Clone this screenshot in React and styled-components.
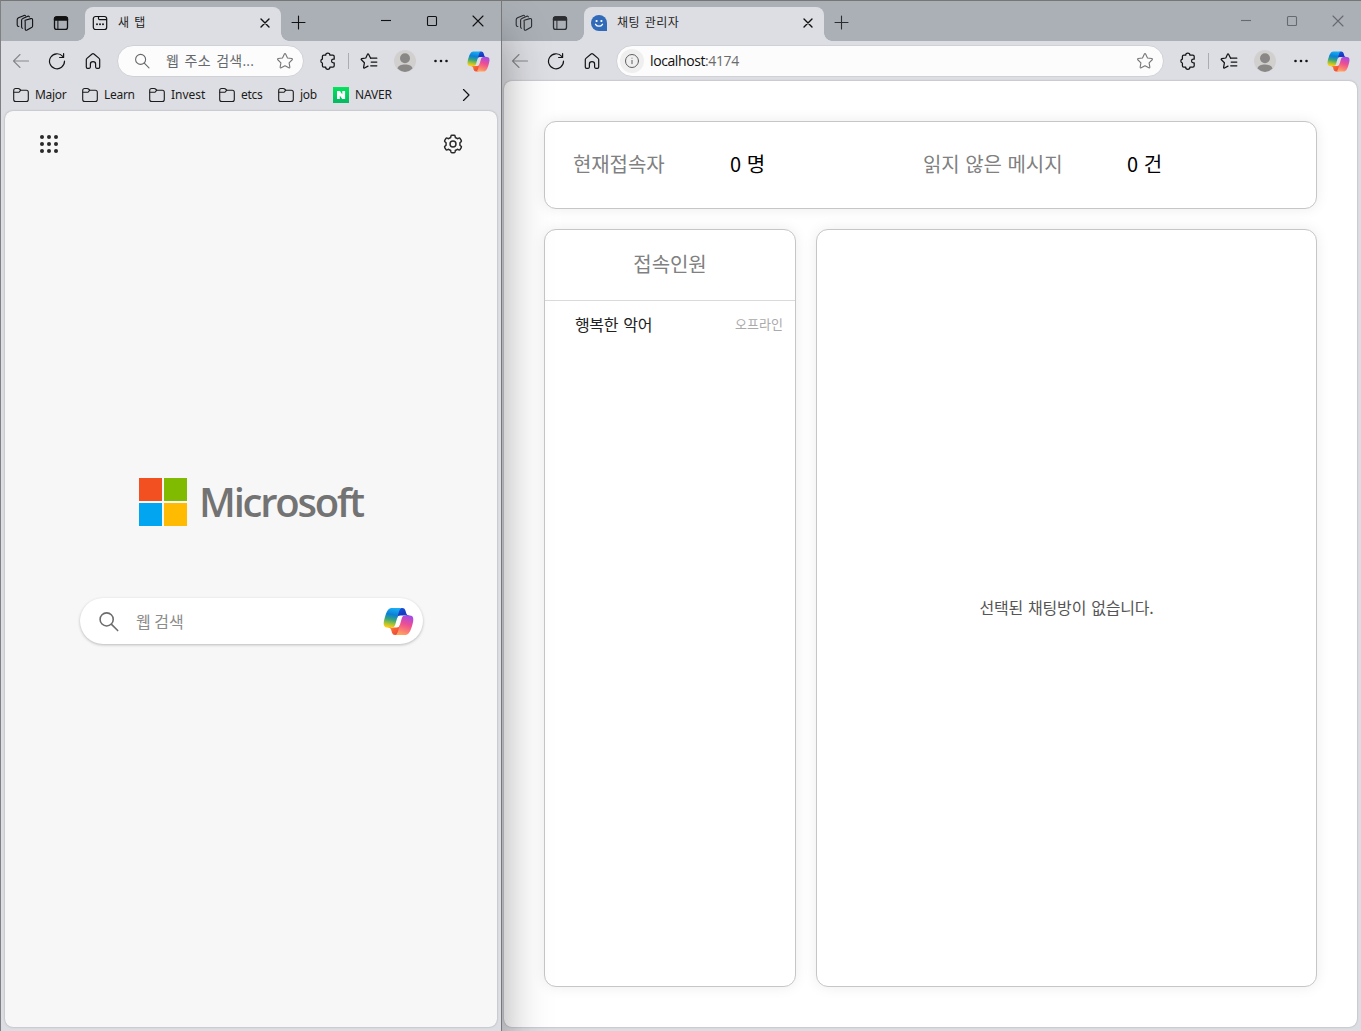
import React, { useId } from "react";
import styled, { createGlobalStyle } from "styled-components";

const GlobalStyle = createGlobalStyle`
  *, *::before, *::after { box-sizing: border-box; }
  body {
    margin: 0;
    overflow: hidden;
    font-family: "Open Sans", "Noto Sans CJK KR", sans-serif;
    color: #111;
  }
`;

const Desktop = styled.div`
  display: flex;
  width: 1361px;
  height: 1031px;
  overflow: hidden;
`;

const BrowserWindow = styled.section`
  display: flex;
  flex-direction: column;
  width: ${(p) => p.$width}px;
  height: 1031px;
  flex: none;
  position: relative;
  z-index: ${(p) => (p.$front ? 1 : 0)};
  border-top: 1px solid #767676;
  border-left: ${(p) => (p.$front ? "1px solid #808083" : "0")};
  border-right: ${(p) => (p.$front ? "1px solid #77787a" : "0")};
  background: #dddee3;
  box-shadow: ${(p) => (p.$front ? "0 36px 44px rgba(0, 0, 0, 0.36)" : "none")};
`;

const TabStrip = styled.header`
  display: flex;
  height: 40px;
  flex: none;
  background: #abb0b7;
  padding-left: ${(p) => p.$inset}px;
  color: ${(p) => (p.$active ? "#111" : "#2b2d30")};
`;

const IconSlot = styled.span`
  display: flex;
  align-items: center;
  justify-content: center;
  flex: none;
  width: ${(p) => p.$w || 36}px;
  height: ${(p) => p.$h || 30}px;
  color: ${(p) => p.$color || "inherit"};
`;

const StripTools = styled.div`
  display: flex;
  padding-top: 4px;
  width: ${(p) => p.$w}px;
  flex: none;
  height: 36px;
`;

const Tab = styled.div`
  position: relative;
  display: flex;
  align-items: center;
  width: ${(p) => p.$width}px;
  height: 34px;
  margin-top: 6px;
  padding: 0 8px 2px 7px;
  border-radius: 8px 8px 0 0;
  background: #dddee3;
  color: #111;
  &::before,
  &::after {
    content: "";
    position: absolute;
    bottom: 0;
    width: 8px;
    height: 8px;
  }
  &::before {
    left: -8px;
    background: radial-gradient(circle at 0 0, transparent 7.5px, #dddee3 8px);
  }
  &::after {
    right: -8px;
    background: radial-gradient(circle at 100% 0, transparent 7.5px, #dddee3 8px);
  }
`;

const TabTitle = styled.span`
  flex: 1;
  padding: 0 0 2px 10px;
  font-size: 12px;
  line-height: 18px;
  letter-spacing: 0.5px;
  word-spacing: 1.5px;
  font-family: "Noto Sans CJK KR", sans-serif;
  color: #222;
  white-space: nowrap;
`;

const WindowControls = styled.div`
  display: flex;
  margin-left: auto;
  color: ${(p) => (p.$active ? "#111" : "#66696d")};
`;

const Toolbar = styled.div`
  display: flex;
  align-items: center;
  height: 40px;
  flex: none;
  padding-left: ${(p) => p.$inset}px;
  color: #141414;
`;

const AddressBar = styled.div`
  display: flex;
  align-items: center;
  width: ${(p) => p.$width}px;
  height: 32px;
  margin: 0 6px 0 6px;
  border: 1px solid #d0d1d5;
  border-radius: 16px;
  background: #fcfcfc;
`;

const AddressText = styled.span`
  flex: 1;
  font-size: 14px;
  line-height: 20px;
  white-space: nowrap;
  color: ${(p) => p.$color || "#66696c"};
  padding-left: ${(p) => p.$pad || 0}px;
  padding-bottom: 1px;
  letter-spacing: ${(p) => p.$spacing}px;
  word-spacing: 1.5px;
`;

const Port = styled.span`
  color: #6b6b6b;
`;

const InfoBadge = styled.span`
  display: flex;
  align-items: center;
  justify-content: center;
  width: 24px;
  height: 24px;
  margin-left: 3px;
  border-radius: 50%;
  background: #efefef;
  color: #5f5f5f;
`;

const Divider = styled.span`
  width: 1px;
  height: 16px;
  margin: 0 2px;
  background: #aaacb1;
`;

const BookmarksBar = styled.nav`
  display: flex;
  align-items: center;
  height: 30px;
  flex: none;
  padding: 0 21px 3px 12px;
`;

const Bookmark = styled.span`
  display: flex;
  align-items: center;
  gap: 6px;
  width: ${(p) => p.$width}px;
  height: 26px;
  font-family: "Noto Sans", sans-serif;
  font-size: 12px;
  line-height: 18px;
  letter-spacing: ${(p) => p.$spacing ?? -0.3}px;
  color: #1b1b1b;
  white-space: nowrap;
`;

const NaverMark = styled.span`
  display: flex;
  width: 16px;
  height: 16px;
  background: linear-gradient(#03e45c, #04b862);
`;

const PageView = styled.main`
  flex: 1;
  display: flex;
  flex-direction: column;
  margin: 0 4px 4px ${(p) => p.$left}px;
  border-radius: 8px;
  background: ${(p) => p.$bg};
  box-shadow: 0 0 2px rgba(60, 60, 70, 0.4);
`;

const NewTabHeader = styled.div`
  display: flex;
  justify-content: space-between;
  padding: 21px 32px 0 32px;
  color: #2a2a2a;
`;

const MicrosoftBrand = styled.div`
  display: flex;
  align-items: center;
  align-self: flex-start;
  gap: 12px;
  height: 48px;
  margin: 322px 0 0 134px;
`;

const MicrosoftSquares = styled.div`
  display: grid;
  grid-template-columns: 23px 23px;
  gap: 2px;
`;

const Square = styled.span`
  height: 23px;
  background: ${(p) => p.$color};
`;

const Wordmark = styled.span`
  font-size: 40px;
  font-weight: 600;
  line-height: 48px;
  letter-spacing: -2.2px;
  color: #737373;
`;

const SearchBox = styled.div`
  display: flex;
  align-items: center;
  align-self: flex-start;
  width: 343px;
  height: 46px;
  margin: 72px 0 0 75px;
  padding: 0 9px 0 18px;
  border-radius: 23px;
  background: #fff;
  box-shadow: 0 1px 3px rgba(0, 0, 0, 0.25);
  color: #6c6c6c;
`;

const SearchHint = styled.span`
  flex: 1;
  padding: 0 0 1px 17px;
  font-family: "Noto Sans CJK KR", sans-serif;
  font-size: 16px;
  line-height: 24px;
  letter-spacing: 0;
  color: #8c8c8c;
`;

const Dashboard = styled(PageView)`
  gap: 20px;
  padding: 40px 40px 40px 40px;
`;

const Card = styled.section`
  border: 1px solid #c6c6c6;
  border-radius: 12px;
  background: #fff;
  box-shadow: 0 0 14px rgba(0, 0, 0, 0.08);
`;

const StatsCard = styled(Card)`
  display: flex;
  align-items: center;
  height: 88px;
  flex: none;
  padding: 0 28px;
  font-family: "Noto Sans CJK KR", sans-serif;
  font-size: 20px;
  line-height: 30px;
`;

const StatLabel = styled.span`
  width: ${(p) => p.$width}px;
  letter-spacing: -0.1px;
  word-spacing: 1.3px;
  color: #808080;
  padding-bottom: 3px;
  white-space: nowrap;
`;

const StatValue = styled.span`
  width: ${(p) => p.$width}px;
  letter-spacing: -0.4px;
  word-spacing: 2px;
  color: #000;
  padding-bottom: 3px;
  white-space: nowrap;
`;

const Panels = styled.div`
  display: flex;
  gap: 20px;
  flex: 1;
  font-family: "Noto Sans CJK KR", sans-serif;
`;

const UsersCard = styled(Card)`
  width: 252px;
`;

const UsersTitle = styled.h2`
  display: flex;
  align-items: center;
  justify-content: center;
  height: 71px;
  margin: 0;
  padding-bottom: 4px;
  border-bottom: 1px solid #dadada;
  font-size: 20px;
  font-weight: 400;
  letter-spacing: -0.05px;
  color: #808080;
`;

const UserRow = styled.div`
  display: flex;
  align-items: center;
  justify-content: space-between;
  height: 46px;
  padding: 0 12px 0 30px;
`;

const UserName = styled.span`
  font-size: 16px;
  line-height: 24px;
  letter-spacing: -0.35px;
  word-spacing: 2px;
  color: #222;
`;

const UserStatus = styled.span`
  font-size: 13px;
  line-height: 20px;
  letter-spacing: 0.05px;
  color: #aaa;
`;

const ChatCard = styled(Card)`
  display: flex;
  align-items: center;
  justify-content: center;
  flex: 1;
  padding-bottom: 2px;
  font-size: 16px;
  letter-spacing: -0.2px;
  word-spacing: 1.6px;
  color: #555;
`;

function Glyph({ size = 16, vb = 16, sw = 1.1, children }) {
  return (
    <svg width={size} height={size} viewBox={`0 0 ${vb} ${vb}`} fill="none" stroke="currentColor" strokeWidth={sw} strokeLinecap="round" strokeLinejoin="round">
      {children}
    </svg>
  );
}

const WorkspacesIcon = () => (
  <Glyph size={18} vb={18}>
    <path d="M9.200 6.300 14.800 4.600c1-.3 1.800.3 1.800 1.300v6.100c0 .7-.4 1.300-1.100 1.600l-4.400 2.500c-1 .5-1.900 0-1.900-1V8.200c0-.8-.5-1.500 0-1.900z" />
    <path d="M6.600 14.200c-.6 0-1-.5-1-1.100V6.300c0-.8.5-1.500 1.200-1.800l5-2.300c.7-.3 1.400 0 1.600.7" />
    <path d="M2.900 12.500c-.8-.1-1.700-.7-1.700-1.600V5.700c0-.9.5-1.600 1.300-2L8.100 1.400c.6-.2 1.200 0 1.400.5" />
  </Glyph>
);

const VerticalTabsIcon = () => (
  <Glyph size={16} sw={1.3}>
    <rect x="1.500" y="1.800" width="13" height="12.600" rx="2.200" />
    <path d="M1.500 5.100V4c0-1.300.9-2.200 2.200-2.200h8.600c1.300 0 2.200.9 2.200 2.200v1.100z" fill="currentColor" />
    <path d="M4.900 5v9" strokeWidth="1" />
  </Glyph>
);

const NewTabIcon = () => (
  <Glyph size={16} sw={1.2}>
    <rect x="1.300" y="1.500" width="13.400" height="13" rx="2.300" />
    <path d="M6.500 1.700v1.800c0 .7.400 1.100 1.100 1.100h6.800" />
    <path d="M5 9.300h.01M8 9.300h.01M11 9.300h.01" strokeWidth="1.900" />
  </Glyph>
);

const CloseIcon = ({ size = 16, pad = 4, sw = 1.4 }) => (
  <Glyph size={size} vb={size} sw={sw}>
    <path d={`M${pad} ${pad} ${size - pad} ${size - pad}M${size - pad} ${pad} ${pad} ${size - pad}`} />
  </Glyph>
);

const PlusIcon = () => (
  <Glyph size={15} vb={15}>
    <path d="M7.500 1v13M1 7.500h13" />
  </Glyph>
);

const MinimizeIcon = () => (
  <Glyph size={12} vb={12}>
    <path d="M1 5.500h10" strokeLinecap="butt" />
  </Glyph>
);

const MaximizeIcon = () => (
  <Glyph size={12} vb={12}>
    <rect x="1.500" y="1.500" width="9" height="9" rx="1" />
  </Glyph>
);

const BackIcon = () => (
  <Glyph size={18} vb={18}>
    <path d="M1.500 9h15M8 2.500 1.500 9 8 15.500" />
  </Glyph>
);

const ReloadIcon = () => (
  <Glyph size={18} vb={18} sw={1.2}>
    <path d="M16.500 9.200A7.500 7.500 0 1 1 14.700 4.400" />
    <path d="M15.600 1.600v3.900h-4" />
  </Glyph>
);

const HomeIcon = () => (
  <Glyph size={16} sw={1.2}>
    <path d="M1.300 6.700c0-.5.200-1 .6-1.300l5.200-4.400c.5-.4 1.300-.4 1.800 0l5.200 4.400c.4.300.6.800.6 1.300v7.300c0 .8-.5 1.300-1.200 1.300h-1.700c-.7 0-1.200-.5-1.200-1.200v-3.200c0-1.200-1-2.200-2.600-2.200s-2.600 1-2.600 2.200v3.200c0 .7-.5 1.200-1.200 1.200H2.500c-.7 0-1.200-.5-1.200-1.300z" />
  </Glyph>
);

const SearchIcon = ({ size = 16, sw }) => (
  <Glyph size={size} sw={sw}>
    <circle cx="6.600" cy="6.400" r="5" />
    <path d="m10.300 10.200 4.700 4.700" />
  </Glyph>
);

const StarIcon = () => (
  <Glyph size={18} vb={18}>
    <path d="M8.400 2c.25-.5.950-.5 1.200 0l1.900 3.950 4.300.6c.6.100.8.800.4 1.200l-3.100 3.050.75 4.300c.1.600-.5 1-1 .75L9 13.800l-3.850 2.050c-.5.250-1.100-.15-1-.75l.75-4.300L1.800 7.750c-.4-.4-.2-1.100.4-1.200l4.300-.6z" />
  </Glyph>
);

const ExtensionIcon = () => (
  <Glyph size={18} vb={18} sw={1.250}>
    <path d="M6.700 3.200a2.100 2.100 0 0 1 4.200 0h2.900c.8 0 1.400.6 1.400 1.400v2.600h-.8a1.850 1.850 0 0 0 0 3.700h.8v2.900c0 .8-.6 1.400-1.400 1.400h-2.900a2.100 2.100 0 0 1-4.200 0H4.800c-.8 0-1.400-.6-1.400-1.400V11a2 2 0 0 1 0-3.900V4.600c0-.8.6-1.400 1.400-1.400z" />
  </Glyph>
);

const FavoritesIcon = () => (
  <Glyph size={18} vb={18} sw={1.250}>
    <path d="M10.600 6.200 8.600 2.300c-.3-.5-.9-.5-1.100 0L5.800 6l-4 .7c-.6.100-.8.700-.4 1.100l3 3-.8 4.500c-.1.600.4 1 .9.700L8 14.100" />
    <path d="M10.700 6.200h6.100M11.200 10h5.600M10.700 13.800h6.100" />
  </Glyph>
);

const MoreIcon = () => (
  <svg width="16" height="16" viewBox="0 0 16 16" fill="currentColor">
    <circle cx="2.500" cy="8" r="1.300" />
    <circle cx="8" cy="8" r="1.300" />
    <circle cx="13.500" cy="8" r="1.300" />
  </svg>
);

const AvatarIcon = () => (
  <svg width="22" height="22" viewBox="0 0 22 22">
    <circle cx="11" cy="11" r="11" fill="#d2d0ce" />
    <circle cx="11" cy="8.200" r="5" fill="#8a8886" />
    <path d="M3.500 18.600C4 15.700 7 14.500 11 14.500s7 1.200 7.500 4.100A11 11 0 0 1 11 22a11 11 0 0 1-7.500-3.400z" fill="#8a8886" />
  </svg>
);

const InfoIcon = () => (
  <Glyph size={16} sw={1}>
    <circle cx="8" cy="8" r="6.500" />
    <path d="M8 7.400v3.300M8 5.200h.01" />
  </Glyph>
);

const FolderIcon = () => (
  <Glyph size={16} sw={1.100}>
    <path d="M.7 3.500c0-1.100.9-2 2-2h2.500c.5 0 1 .2 1.300.5l1.200 1.200h5.600c1.100 0 2 .9 2 2v7.300c0 1.100-.9 2-2 2H2.700c-1.100 0-2-.9-2-2z" />
    <path d="M.9 5.300h4.300c.5 0 .9-.2 1.200-.5l1.300-1.600" />
  </Glyph>
);

const ChevronIcon = () => (
  <Glyph size={12} vb={12} sw={1.200}>
    <path d="M3.500.5 9 6l-5.500 5.500" />
  </Glyph>
);

const AppsIcon = () => (
  <svg width="20" height="20" viewBox="0 0 20 20" fill="#2a2a2a">
    {[3, 10, 17].map((y) => [3, 10, 17].map((x) => <circle key={`${x}-${y}`} cx={x} cy={y} r="2" />))}
  </svg>
);

const GearIcon = () => (
  <Glyph size={22} vb={20} sw={1.350}>
    <path d="M9 1.500h2c.6 0 .8.300.9.800l.2 1.300 1.900 1.100 1.300-.5c.5-.2.900-.1 1.200.4l1 1.700c.3.500.2.900-.2 1.200l-1 .9v2.200l1 .9c.4.300.5.700.2 1.200l-1 1.700c-.3.500-.7.600-1.200.4l-1.300-.5-1.900 1.100-.2 1.300c-.1.500-.3.800-.9.800H9c-.6 0-.8-.3-.9-.8l-.2-1.300L6 14.300l-1.300.5c-.5.200-.9.100-1.200-.4l-1-1.700c-.3-.5-.2-.9.2-1.200l1-.9V8.400l-1-.9c-.4-.3-.5-.7-.2-1.200l1-1.700c.3-.5.7-.6 1.200-.4l1.300.5 1.900-1.100.2-1.300c.1-.5.3-.8.9-.8z" transform="translate(0 .5)" />
    <circle cx="10" cy="10" r="2.700" />
  </Glyph>
);

const SmileIcon = () => (
  <svg width="16" height="16" viewBox="0 0 16 16">
    <path d="M8 0a8 8 0 1 0 0 16h8V8a8 8 0 0 0-8-8z" fill="#306ab8" />
    <circle cx="5.600" cy="6" r="1.100" fill="#fff" />
    <circle cx="10.400" cy="6" r="1.100" fill="#fff" />
    <path d="M4.500 9.300c1.600 2.500 5.400 2.500 7 0" fill="none" stroke="#fff" strokeWidth="1.300" strokeLinecap="round" />
  </svg>
);

function CopilotIcon({ size }) {
  const id = useId().replace(/[^a-zA-Z0-9]/g, "");
  return (
    <svg width={size} height={size} viewBox="1 2 46 44">
      <defs>
        <linearGradient id={`${id}a`} x1="0.3" y1="0" x2="0.8" y2="1">
          <stop offset="0" stopColor="#1b53d8" />
          <stop offset="0.5" stopColor="#1538c0" />
          <stop offset="1" stopColor="#2a6ee8" />
        </linearGradient>
        <linearGradient id={`${id}b`} x1="0" y1="0" x2="1" y2="1">
          <stop offset="0" stopColor="#ffb64a" />
          <stop offset="0.5" stopColor="#f7652f" />
          <stop offset="1" stopColor="#e33d4a" />
        </linearGradient>
        <linearGradient id={`${id}c`} x1="0.6" y1="0" x2="0.4" y2="1">
          <stop offset="0" stopColor="#18b0f4" />
          <stop offset="0.35" stopColor="#0b7fd8" />
          <stop offset="0.6" stopColor="#35a57f" />
          <stop offset="0.85" stopColor="#b4c52c" />
          <stop offset="1" stopColor="#ffcb12" />
        </linearGradient>
        <linearGradient id={`${id}d`} x1="0.7" y1="0" x2="0.4" y2="1">
          <stop offset="0" stopColor="#a34ae8" />
          <stop offset="0.45" stopColor="#ee4f91" />
          <stop offset="0.8" stopColor="#fb8270" />
          <stop offset="1" stopColor="#ffa65a" />
        </linearGradient>
      </defs>
      <path fill={`url(#${id}a)`} d="M34.142 7.325A4.630 4.630 0 0 0 29.700 4H28.350a4.630 4.630 0 0 0-4.554 3.794L21.480 20.407l.575-1.965a4.630 4.630 0 0 1 4.444-3.330h7.853l3.294 1.282 3.175-1.283h-.926a4.630 4.630 0 0 1-4.443-3.325z" />
      <path fill={`url(#${id}b)`} d="M14.330 40.656A4.630 4.630 0 0 0 18.779 44h2.870a4.630 4.630 0 0 0 4.629-4.510l.312-12.163-.654 2.233a4.630 4.630 0 0 1-4.443 3.329h-7.919l-2.823-1.531-3.057 1.531h.911a4.630 4.630 0 0 1 4.447 3.344z" />
      <path fill={`url(#${id}c)`} d="M29.500 4H13.460c-4.583 0-7.332 6.057-9.165 12.113-2.172 7.176-5.014 16.775 3.207 16.775h6.925a4.630 4.630 0 0 0 4.459-3.358 2078 2078 0 0 1 4.971-17.156c.843-2.843 1.544-5.284 2.621-6.805C27.080 4.717 28.086 4 29.499 4" />
      <path fill={`url(#${id}d)`} d="M18.498 44h16.040c4.582 0 7.332-6.058 9.165-12.115 2.171-7.177 5.013-16.775-3.207-16.775h-6.926a4.630 4.630 0 0 0-4.459 3.358 2084 2084 0 0 1-4.972 17.160c-.842 2.842-1.544 5.283-2.620 6.805-.604.852-1.610 1.567-3.021 1.567" />
    </svg>
  );
}

function Strip({ active, inset, toolsWidth, tabWidth, icon, title }) {
  return (
    <TabStrip $inset={inset} $active={active}>
      <StripTools $w={toolsWidth}>
        <IconSlot $h={36}><WorkspacesIcon /></IconSlot>
        <IconSlot $h={36}><VerticalTabsIcon /></IconSlot>
      </StripTools>
      <Tab $width={tabWidth}>
        {icon}
        <TabTitle>{title}</TabTitle>
        <IconSlot $w={16}><CloseIcon /></IconSlot>
      </Tab>
      <IconSlot $w={35} $h={43}><PlusIcon /></IconSlot>
      <WindowControls $active={active}>
        <IconSlot $w={46} $h={40}><MinimizeIcon /></IconSlot>
        <IconSlot $w={46} $h={40}><MaximizeIcon /></IconSlot>
        <IconSlot $w={46} $h={40}><CloseIcon size={12} pad={1} sw={1.1} /></IconSlot>
      </WindowControls>
    </TabStrip>
  );
}

function Tools({ inset, addressWidth, children }) {
  return (
    <Toolbar $inset={inset}>
      <IconSlot $color="#85878b"><BackIcon /></IconSlot>
      <IconSlot><ReloadIcon /></IconSlot>
      <IconSlot><HomeIcon /></IconSlot>
      <AddressBar $width={addressWidth}>{children}</AddressBar>
      <IconSlot><ExtensionIcon /></IconSlot>
      <Divider />
      <IconSlot><FavoritesIcon /></IconSlot>
      <IconSlot><AvatarIcon /></IconSlot>
      <IconSlot><MoreIcon /></IconSlot>
      <IconSlot $w={39}><CopilotIcon size={23} /></IconSlot>
    </Toolbar>
  );
}

const folders = [
  { name: "Major", width: 69 },
  { name: "Learn", width: 67 },
  { name: "Invest", width: 70, spacing: 0 },
  { name: "etcs", width: 59 },
  { name: "job", width: 55 },
];

export default function App() {
  return (
    <>
      <GlobalStyle />
      <Desktop>
        <BrowserWindow $front $width={502}>
          <Strip active inset={6} toolsWidth={78} tabWidth={196} icon={<NewTabIcon />} title="새 탭" />
          <Tools inset={2} addressWidth={187}>
            <IconSlot $w={48} $color="#66696c"><SearchIcon /></IconSlot>
            <AddressText $spacing={0.25}>웹 주소 검색...</AddressText>
            <IconSlot $color="#777"><StarIcon /></IconSlot>
          </Tools>
          <BookmarksBar>
            {folders.map((f) => (
              <Bookmark key={f.name} $width={f.width} $spacing={f.spacing}><FolderIcon />{f.name}</Bookmark>
            ))}
            <Bookmark $width={124} $spacing={-0.15}>
              <NaverMark>
                <svg width="16" height="16" viewBox="0 0 16 16" fill="#fff">
                  <path d="M4 4h3l2.300 3.500V4h2.800v8H9.200L6.800 8.500V12H4z" />
                </svg>
              </NaverMark>
              NAVER
            </Bookmark>
            <IconSlot $w={17} $h={26}><ChevronIcon /></IconSlot>
          </BookmarksBar>
          <PageView $left={4} $bg="#f7f7f7">
            <NewTabHeader>
              <IconSlot $w={24} $h={24}><AppsIcon /></IconSlot>
              <IconSlot $w={24} $h={24}><GearIcon /></IconSlot>
            </NewTabHeader>
            <MicrosoftBrand>
              <MicrosoftSquares>
                <Square $color="#f35022" />
                <Square $color="#80bb01" />
                <Square $color="#02a5f0" />
                <Square $color="#ffba02" />
              </MicrosoftSquares>
              <Wordmark>Microsoft</Wordmark>
            </MicrosoftBrand>
            <SearchBox>
              <SearchIcon size={21} sw={1.200} />
              <SearchHint>웹 검색</SearchHint>
              <CopilotIcon size={31} />
            </SearchBox>
          </PageView>
        </BrowserWindow>

        <BrowserWindow $width={859}>
          <Strip inset={4} toolsWidth={78} tabWidth={240} icon={<SmileIcon />} title="채팅 관리자" />
          <Tools inset={0} addressWidth={548}>
            <InfoBadge><InfoIcon /></InfoBadge>
            <AddressText $color="#111" $pad={6} $spacing={-0.400}>localhost<Port>:4174</Port></AddressText>
            <IconSlot $color="#777"><StarIcon /></IconSlot>
          </Tools>
          <Dashboard $left={2} $bg="#fff">
            <StatsCard>
              <StatLabel $width={157}>현재접속자</StatLabel>
              <StatValue $width={193}>0 명</StatValue>
              <StatLabel $width={204}>읽지 않은 메시지</StatLabel>
              <StatValue $width={60}>0 건</StatValue>
            </StatsCard>
            <Panels>
              <UsersCard>
                <UsersTitle>접속인원</UsersTitle>
                <UserRow>
                  <UserName>행복한 악어</UserName>
                  <UserStatus>오프라인</UserStatus>
                </UserRow>
              </UsersCard>
              <ChatCard>선택된 채팅방이 없습니다.</ChatCard>
            </Panels>
          </Dashboard>
        </BrowserWindow>
      </Desktop>
    </>
  );
}
